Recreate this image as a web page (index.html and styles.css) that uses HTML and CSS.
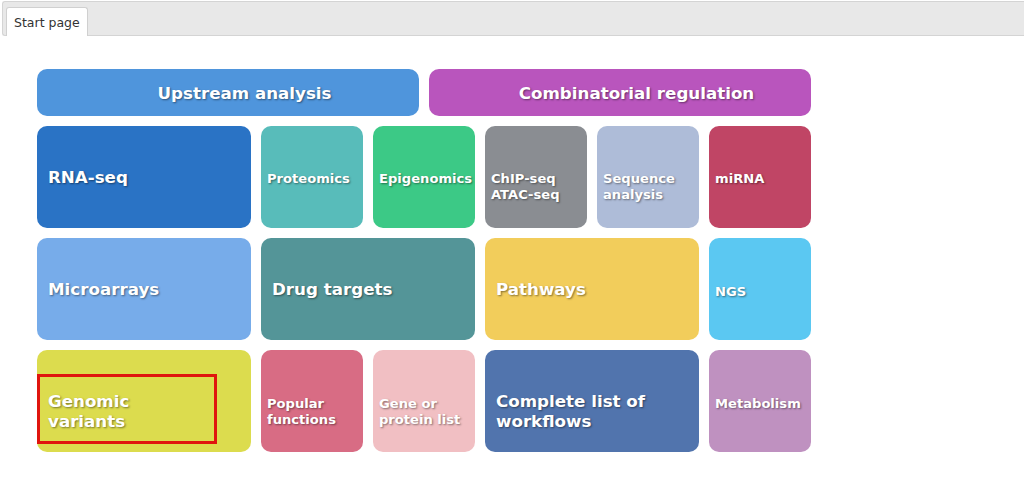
FILE: index.html
```html
<!DOCTYPE html>
<html>
<head>
<meta charset="utf-8">
<link rel="stylesheet" href="styles.css">
</head>
<body>
<div class="tabbar"><div class="tab">Start page</div></div>
<div class="board">
  <div class="heads">
    <div class="head upstream">Upstream analysis</div>
    <div class="head combi">Combinatorial regulation</div>
  </div>
  <div class="grid">
    <div class="tile big c-rnaseq">RNA-seq</div>
    <div class="tile c-prot">Proteomics</div>
    <div class="tile c-epi">Epigenomics</div>
    <div class="tile c-chip">ChIP-seq<br>ATAC-seq</div>
    <div class="tile c-seq">Sequence<br>analysis</div>
    <div class="tile c-mirna">miRNA</div>

    <div class="tile big c-micro">Microarrays</div>
    <div class="tile big c-drug">Drug targets</div>
    <div class="tile big c-path">Pathways</div>
    <div class="tile c-ngs">NGS</div>

    <div class="tile big c-geno">Genomic<br>variants<span class="highlight"></span></div>
    <div class="tile c-pop">Popular<br>functions</div>
    <div class="tile c-gene">Gene or<br>protein list</div>
    <div class="tile big c-complete">Complete list of<br>workflows</div>
    <div class="tile c-meta">Metabolism</div>
  </div>
</div>
</body>
</html>
```

FILE: styles.css
```css
html, body {
  margin: 0;
  padding: 0;
  background: #ffffff;
}
body {
  font-family: "DejaVu Sans", Verdana, sans-serif;
}
.tabbar {
  margin: 1px 0 0 2px;
  height: 33px;
  background: #e8e8e8;
  border: 1px solid #d4d4d4;
  border-right: none;
  border-radius: 3px 0 0 3px;
  display: flex;
  align-items: flex-end;
  padding-left: 3px;
}
.tab {
  height: 29px;
  box-sizing: border-box;
  background: #ffffff;
  border: 1px solid #d0d0d0;
  border-bottom: none;
  border-radius: 3px 3px 0 0;
  padding: 0 7px;
  margin-bottom: -1px;
  display: flex;
  align-items: center;
  font-size: 12.5px;
  color: #333333;
  width: 82px;
}
.board {
  margin: 33px 0 0 37px;
  width: 774px;
}
.heads {
  display: flex;
  gap: 10px;
  margin-bottom: 10px;
}
.head {
  flex: 1;
  height: 47px;
  box-sizing: border-box;
  padding: 0 0 0 33px;
  border-radius: 10px;
  color: #fff;
  font-weight: bold;
  font-size: 16.7px;
  display: flex;
  align-items: center;
  justify-content: center;
  text-shadow: 1px 1px 2px rgba(0,0,0,0.45);
}
.upstream { background: #4f95dc; }
.combi { background: #b955bd; }
.grid {
  display: grid;
  grid-template-columns: repeat(7, 102px);
  grid-auto-rows: 102px;
  gap: 10px;
}
.tile {
  position: relative;
  border-radius: 10px;
  color: #fff;
  font-weight: bold;
  font-size: 13.1px;
  line-height: 16px;
  padding: 45px 0 0 6px;
  box-sizing: border-box;
  text-shadow: 1px 1px 2px rgba(0,0,0,0.45);
  white-space: nowrap;
}
.tile.big {
  grid-column: span 2;
  font-size: 16.7px;
  line-height: 20px;
  padding: 41px 0 0 11px;
}
.c-rnaseq { background: #2a73c5; }
.c-prot { background: #58bcba; }
.c-epi { background: #3cc986; }
.c-chip { background: #8a8d92; }
.c-seq { background: #aebcd8; }
.c-mirna { background: #c04565; }
.c-micro { background: #77acea; }
.c-drug { background: #549598; }
.c-path { background: #f2cd5b; }
.c-ngs { background: #5bc8f2; }
.c-geno { background: #dcdc4e; }
.c-pop { background: #d86c84; }
.c-gene { background: #f1bfc3; }
.c-complete { background: #5174ad; }
.c-meta { background: #bf91c0; }
.c-ngs, .c-meta { padding-top: 46px; }
.c-pop, .c-gene { padding-top: 46px; }
.highlight {
  position: absolute;
  left: 0;
  top: 24px;
  width: 180px;
  height: 70px;
  box-sizing: border-box;
  border: 3px solid #e0150e;
}
```
